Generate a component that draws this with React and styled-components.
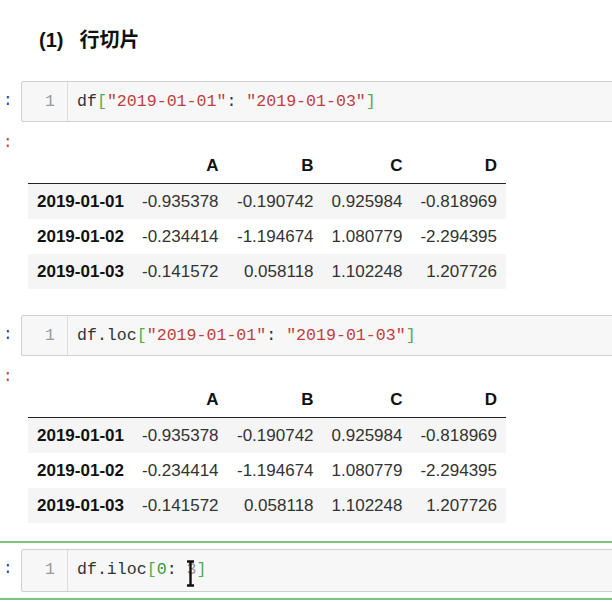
import React from 'react';
import styled, { createGlobalStyle } from 'styled-components';

const GlobalStyle = createGlobalStyle`
  html, body {
    margin: 0;
    padding: 0;
    background: #ffffff;
    overflow: hidden;
  }
`;

const Page = styled.div`
  width: 760px;
  font-family: "Liberation Sans", Arial, sans-serif;
`;

const MarkdownCell = styled.div`
  padding: 27px 0 20px 39px;
`;

const Heading = styled.h4`
  margin: 0;
  font-family: "Liberation Sans", "Noto Sans CJK SC", sans-serif;
  font-size: 20px;
  line-height: 26px;
  font-weight: 700;
  color: #111;
`;

const Num = styled.span`
  margin-right: 16px;
`;

const Cell = styled.div`
  padding: 6px 0;
  border-top: 2px solid ${p => (p.selected ? '#7cc47f' : 'transparent')};
  border-bottom: 2px solid ${p => (p.selected ? '#7cc47f' : 'transparent')};
`;

const Row = styled.div`
  display: flex;
  align-items: flex-start;
`;

const Prompt = styled.div`
  width: 21px;
  flex: none;
  box-sizing: border-box;
  padding-left: 3px;
  font-family: "Liberation Mono", monospace;
  font-size: 16px;
  color: ${p => (p.out ? '#d84315' : '#303f9f')};
  line-height: ${p => (p.out ? '26px' : '41px')};
`;

const CodeBox = styled.div`
  flex: 1;
  display: flex;
  height: ${p => (p.tall ? 43 : 41)}px;
  box-sizing: border-box;
  border: 1px solid #cfcfcf;
  background: #f7f7f7;
  border-radius: 2px;
`;

const Gutter = styled.div`
  width: 46px;
  box-sizing: border-box;
  border-right: 1px solid #dddddd;
  padding-right: 12px;
  text-align: right;
  font-family: "Liberation Mono", monospace;
  font-size: 16.5px;
  line-height: 39px;
  color: #999999;
`;

const Code = styled.pre`
  margin: 0;
  padding-left: 9px;
  font-family: "Liberation Mono", monospace;
  font-size: 16.6px;
  line-height: 39px;
  color: #333333;
`;

const Tok = styled.span`
  color: ${p =>
    p.kind === 'str' ? '#bf3f3f' : p.kind === 'br' ? '#4caf50' : p.kind === 'num' ? '#3c9a3c' : '#333333'};
  ${p => (p.dim ? 'color: #9a9a9a; position: relative;' : '')}
`;

const Cursor = styled.svg`
  position: absolute;
  left: -1px;
  top: 0px;
`;

const Output = styled.div`
  display: flex;
  align-items: flex-start;
  margin-top: 8px;
  padding-bottom: ${p => p.pb}px;
`;

const Frame = styled.table`
  margin: 18px 0 0 7px;
  border-collapse: collapse;
  font-size: 17px;
  color: #333333;
  table-layout: fixed;
  white-space: nowrap;
`;

const Th = styled.th`
  height: 35px;
  padding: 0 9px;
  text-align: ${p => (p.left ? 'left' : 'right')};
  font-weight: 700;
  color: #111111;
`;

const HeadRow = styled.tr`
  border-bottom: 1px solid #222222;
`;

const BodyRow = styled.tr`
  background: ${p => (p.odd ? '#f5f5f5' : '#ffffff')};
`;

const Td = styled.td`
  height: 35px;
  padding: 0 9px;
  text-align: right;
`;

const rows = [
  ['2019-01-01', '-0.935378', '-0.190742', '0.925984', '-0.818969'],
  ['2019-01-02', '-0.234414', '-1.194674', '1.080779', '-2.294395'],
  ['2019-01-03', '-0.141572', '0.058118', '1.102248', '1.207726'],
];

const widths = [104, 94, 95, 85, 94];

function DataFrame() {
  return (
    <Frame>
      <colgroup>
        {widths.map((w, i) => (
          <col key={i} style={{ width: w }} />
        ))}
      </colgroup>
      <thead>
        <HeadRow>
          <Th />
          <Th>A</Th>
          <Th>B</Th>
          <Th>C</Th>
          <Th>D</Th>
        </HeadRow>
      </thead>
      <tbody>
        {rows.map((r, i) => (
          <BodyRow key={r[0]} odd={i % 2 === 0}>
            <Th left>{r[0]}</Th>
            {r.slice(1).map((v, j) => (
              <Td key={j}>{v}</Td>
            ))}
          </BodyRow>
        ))}
      </tbody>
    </Frame>
  );
}

function InputLine({ children, tall }) {
  return (
    <Row>
      <Prompt>:</Prompt>
      <CodeBox tall={tall}>
        <Gutter>1</Gutter>
        <Code>{children}</Code>
      </CodeBox>
    </Row>
  );
}

export default function App() {
  return (
    <Page>
      <GlobalStyle />
      <MarkdownCell>
        <Heading>
          <Num>(1)</Num>行切片
        </Heading>
      </MarkdownCell>

      <Cell>
        <InputLine>
          df<Tok kind="br">[</Tok>
          <Tok kind="str">"2019-01-01"</Tok>: <Tok kind="str">"2019-01-03"</Tok>
          <Tok kind="br">]</Tok>
        </InputLine>
        <Output pb={10}>
          <Prompt out>:</Prompt>
          <DataFrame />
        </Output>
      </Cell>

      <Cell>
        <InputLine>
          df.loc<Tok kind="br">[</Tok>
          <Tok kind="str">"2019-01-01"</Tok>: <Tok kind="str">"2019-01-03"</Tok>
          <Tok kind="br">]</Tok>
        </InputLine>
        <Output pb={10}>
          <Prompt out>:</Prompt>
          <DataFrame />
        </Output>
      </Cell>

      <Cell selected>
        <InputLine tall>
          df.iloc<Tok kind="br">[</Tok>
          <Tok kind="num">0</Tok>: <Tok dim>3
            <Cursor width="9" height="27" viewBox="0 0 9 27">
              <path d="M1 1.5h7M4.5 1.5v24M1 25.5h7" stroke="#111" strokeWidth="2.4" fill="none" />
            </Cursor>
          </Tok>
          <Tok kind="br">]</Tok>
        </InputLine>
      </Cell>
    </Page>
  );
}
